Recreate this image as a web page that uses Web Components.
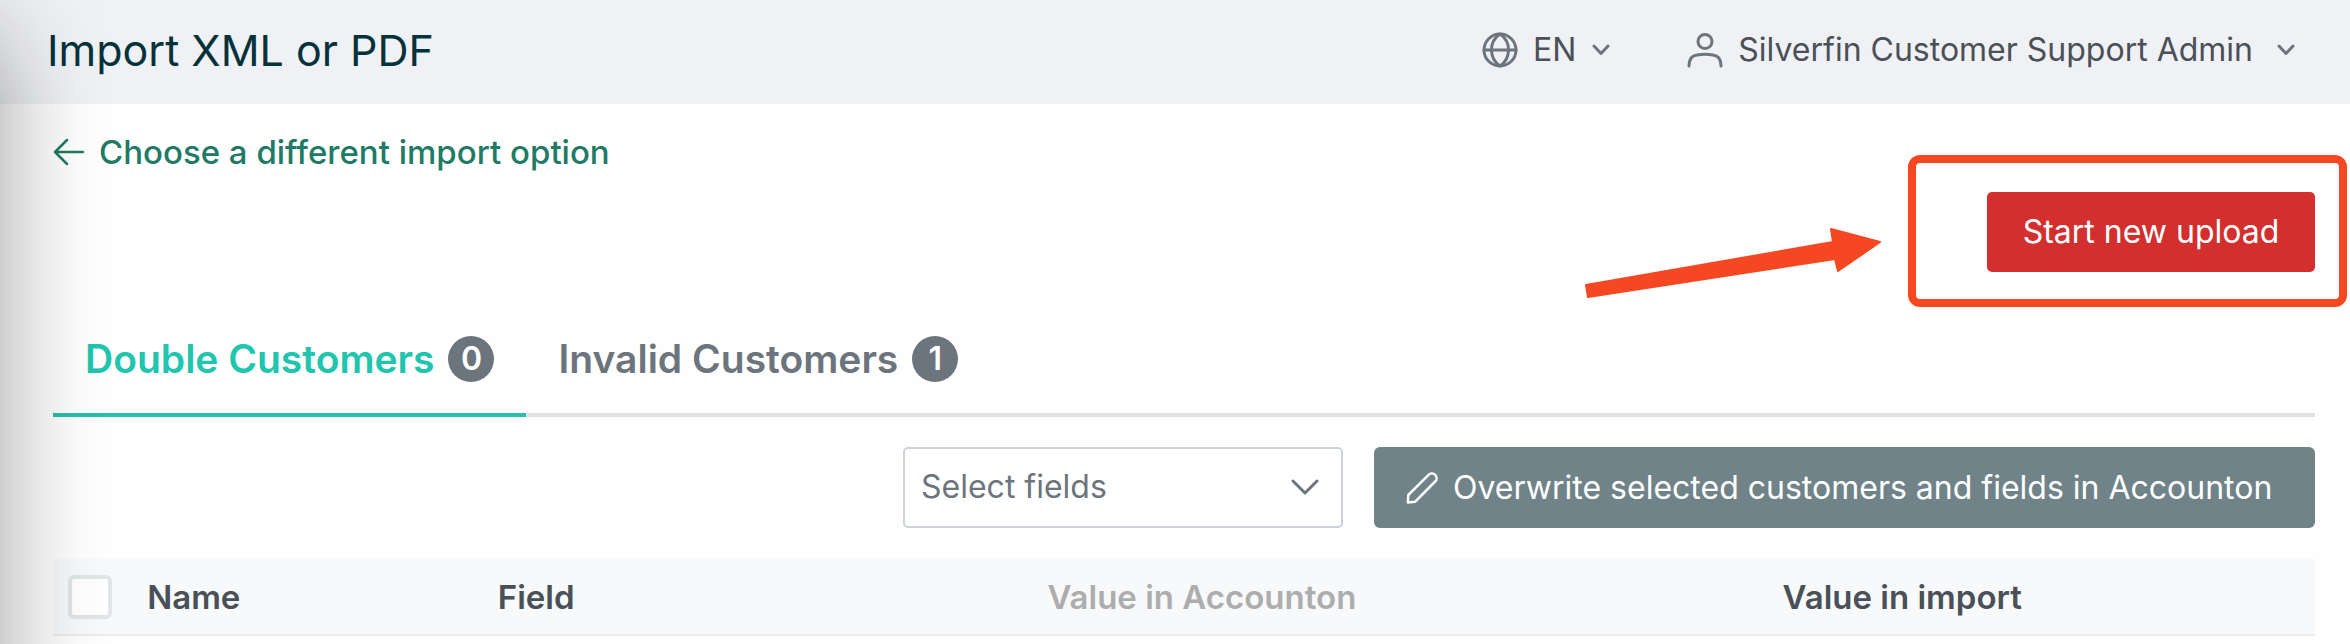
<!DOCTYPE html>
<html lang="en">
<head>
<meta charset="utf-8">
<title>Import XML or PDF</title>
<style>
  body { margin: 0; background: #fefefe; font-family: Inter, "Open Sans", sans-serif; font-size: 32px; line-height: 48px; color: #495057; }
</style>
</head>
<body>
<import-page>
  <page-header slot="header" heading="Import XML or PDF">
    <header-menu icon="globe" class="language">EN</header-menu>
    <header-menu icon="user" class="account">Silverfin Customer Support Admin</header-menu>
  </page-header>
  <back-link>Choose a different import option</back-link>
  <upload-action>Start new upload</upload-action>
  <tab-bar>
    <tab-item selected count="0">Double Customers</tab-item>
    <tab-item count="1">Invalid Customers</tab-item>
  </tab-bar>
  <field-toolbar></field-toolbar>
  <customer-table></customer-table>
</import-page>

<script>
const define = (name, html, setup) => {
  const template = document.createElement('template');
  template.innerHTML = html;
  customElements.define(name, class extends HTMLElement {
    connectedCallback() {
      if (this.shadowRoot) return;
      const root = this.attachShadow({ mode: 'open' });
      root.append(template.content.cloneNode(true));
      if (setup) setup(this, root);
    }
  });
};

const icons = {
  globe: '<circle cx="18" cy="18" r="16"/><path d="M2 18H34M18 2C12 6 9.500 12 9.500 18S12 30 18 34C24 30 26.500 24 26.500 18S24 6 18 2Z"/>',
  user: '<circle cx="18" cy="9.500" r="7"/><path d="M2 34C2 27 5 23.500 10 23C15 22 21 22 26 23C31 23.500 34 27 34 34"/>'
};

define('import-page', `
  <style>
    :host { display: block; position: relative; min-height: 100vh; }
    main { padding: 24px 35px 0 53px; }
    .edge { position: absolute; inset: 0 auto 0 0; width: 110px; pointer-events: none;
      background: linear-gradient(90deg, rgba(0,0,0,.19), rgba(0,0,0,.13) 18%, rgba(0,0,0,.07) 40%, rgba(0,0,0,.02) 70%, transparent);
      -webkit-mask: linear-gradient(rgba(0,0,0,.25), #000 110px); mask: linear-gradient(rgba(0,0,0,.25), #000 110px); }
  </style>
  <slot name="header"></slot>
  <main><slot></slot></main>
  <div class="edge"></div>`);

define('page-header', `
  <style>
    :host { display: block; background: #f0f1f5; }
    header { display: flex; align-items: center; justify-content: space-between; min-height: 100px; padding: 0 55px 4px 47px; }
    h1 { margin: 0; font-size: 43px; line-height: 56px; font-weight: 400; color: #04323a; }
    nav { display: flex; gap: 77px; }
  </style>
  <header><h1></h1><nav><slot></slot></nav></header>`,
  (host, root) => { root.querySelector('h1').textContent = host.getAttribute('heading'); });

define('header-menu', `
  <style>
    :host { display: block; --caret-gap: 16px; }
    :host(.account) { --caret-gap: 24px; }
    button { display: flex; align-items: center; border: 0; padding: 0; background: none; font: inherit; color: inherit; cursor: pointer; }
    svg { display: block; fill: none; stroke: #6c757d; stroke-width: 3; stroke-linecap: round; stroke-linejoin: round; }
    .icon { margin-right: 15px; }
    .caret { margin-left: var(--caret-gap); }
  </style>
  <button type="button" aria-haspopup="true">
    <svg class="icon" width="36" height="36" viewBox="0 0 36 36"></svg>
    <slot></slot>
    <svg class="caret" width="18" height="12" viewBox="0 0 18 12"><path d="M2 2L9 9.500L16 2"/></svg>
  </button>`,
  (host, root) => { root.querySelector('.icon').innerHTML = icons[host.getAttribute('icon')]; });

define('back-link', `
  <style>
    :host { display: flex; }
    a { display: flex; align-items: center; gap: 14px; color: #217a65; font-size: 33px; font-weight: 500; text-decoration: none; }
  </style>
  <a href="#"><svg width="32" height="28" viewBox="0 0 32 28" fill="none" stroke="#217a65" stroke-width="2.500" stroke-linecap="round" stroke-linejoin="round"><path d="M30 14H2M14 2L2 14L14 26"/></svg><slot></slot></a>`);

define('upload-action', `
  <style>
    :host { display: flex; justify-content: flex-end; margin-top: 16px; }
    .target { position: relative; }
    button { display: block; width: 328px; height: 80px; border: 0; border-radius: 5px; background: #d32f2f; color: #fff; font: inherit; cursor: pointer; }
    .frame { position: absolute; inset: -37px -32px -35px -79px; border: 8px solid #f54822; border-radius: 12px; pointer-events: none; }
    .arrow { position: absolute; right: 432px; top: 32px; pointer-events: none; }
  </style>
  <div class="target">
    <button type="button"><slot></slot></button>
    <div class="frame"></div>
    <svg class="arrow" width="300" height="80" viewBox="0 0 300 80" fill="#f54822" stroke="#f54822" stroke-width="2" stroke-linejoin="round"><path d="M3 61L250 18L248 5L297 18L255 47L252 35L5 73Z"/></svg>
  </div>`);

define('tab-bar', `
  <style>
    :host { display: block; margin-top: 32px; }
    div { display: flex; box-shadow: inset 0 -4px #dee0e4; }
  </style>
  <div role="tablist"><slot></slot></div>`);

define('tab-item', `
  <style>
    :host { display: block; }
    button { display: flex; align-items: center; gap: 14px; padding: 32px 32px 31px; border: 0; border-bottom: 4px solid transparent; background: none; font: inherit; font-size: 39px; line-height: 46px; font-weight: 600; color: #6c757d; cursor: pointer; }
    :host([selected]) button { color: #20c5b0; border-color: #27bfac; }
    .count { width: 46px; height: 46px; border-radius: 50%; background: #6c757d; color: #fff; font-size: 32px; text-align: center; }
  </style>
  <button type="button" role="tab"><slot></slot><span class="count"></span></button>`,
  (host, root) => {
    root.querySelector('.count').textContent = host.getAttribute('count');
    root.querySelector('button').setAttribute('aria-selected', host.hasAttribute('selected'));
  });

define('field-toolbar', `
  <style>
    :host { display: flex; justify-content: flex-end; gap: 31px; margin-top: 30px; }
    .field { position: relative; width: 440px; }
    select { appearance: none; display: block; box-sizing: border-box; width: 100%; height: 81px; padding: 0 60px 2px 16px; border: 2px solid #ccd2d7; border-radius: 5px; background: #fff; font: inherit; color: #6c757d; }
    .field svg { position: absolute; right: 24px; top: 31px; pointer-events: none; }
    button { display: flex; align-items: center; gap: 15px; width: 41.6%; height: 81px; padding: 0 32px; border: 0; border-radius: 6px; background: #6f8388; color: #fff; font: inherit; white-space: nowrap; cursor: pointer; }
  </style>
  <div class="field">
    <select aria-label="Select fields"><option>Select fields</option></select>
    <svg width="28" height="18" viewBox="0 0 28 18" fill="none" stroke="#6c757d" stroke-width="3" stroke-linecap="round" stroke-linejoin="round"><path d="M2 3L14 15L26 3"/></svg>
  </div>
  <button type="button">
    <svg width="32" height="32" viewBox="0 0 32 32" fill="none" stroke="#fff" stroke-width="2.500" stroke-linejoin="round"><path d="M1.800 30.500L2.300 23L22.500 2.800A4.600 4.600 0 0 1 29.200 9.500L9 29.800Z"/></svg>
    <span>Overwrite selected customers and fields in Accounton</span>
  </button>`);

define('customer-table', `
  <style>
    :host { display: block; margin-top: 31px; }
    table { width: 100%; table-layout: fixed; border-collapse: separate; border-spacing: 0; background: #f8f9fb; }
    th { height: 75px; padding: 0 0 0 15px; border-bottom: 2px solid #e9ebed; font-size: 33px; font-weight: 600; text-align: left; vertical-align: middle; }
    .pick { width: 3.5%; }
    .name { width: 15.5%; }
    .field { width: 24.3%; }
    .current { width: 32.5%; }
    th.current { color: #adadad; }
    input { appearance: none; display: block; box-sizing: border-box; width: 44px; height: 44px; margin: 0; border: 4px solid #e0e5e7; border-radius: 6px; background: #fff; }
  </style>
  <table>
    <colgroup><col class="pick"><col class="name"><col class="field"><col class="current"><col></colgroup>
    <thead><tr>
      <th scope="col"><input type="checkbox" aria-label="Select all customers"></th>
      <th scope="col">Name</th>
      <th scope="col">Field</th>
      <th scope="col" class="current">Value in Accounton</th>
      <th scope="col">Value in import</th>
    </tr></thead>
  </table>`);
</script>
</body>
</html>
